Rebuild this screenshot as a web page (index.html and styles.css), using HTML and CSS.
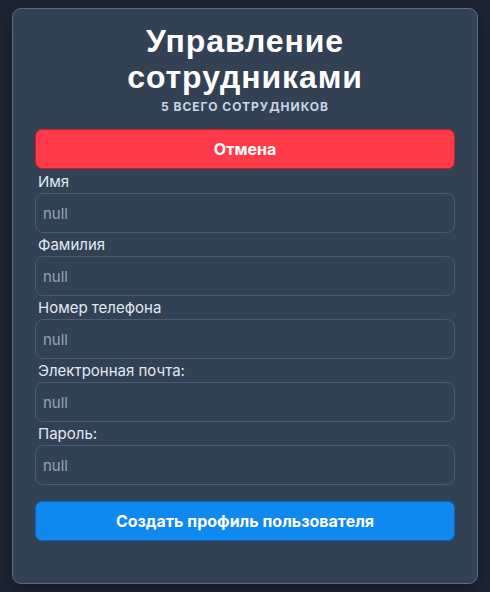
FILE: index.html
```html
<!DOCTYPE html>
<html lang="ru">
<head>
<meta charset="utf-8">
<link rel="stylesheet" href="styles.css">
</head>
<body>
<div class="card">
  <h1 class="title">Управление сотрудниками</h1>
  <div class="subtitle">5 всего сотрудников</div>
  <button class="btn btn-cancel">Отмена</button>
  <form class="form">
    <label class="field"><span class="label">Имя</span><input class="input" placeholder="null"></label>
    <label class="field"><span class="label">Фамилия</span><input class="input" placeholder="null"></label>
    <label class="field"><span class="label">Номер телефона</span><input class="input" placeholder="null"></label>
    <label class="field"><span class="label">Электронная почта:</span><input class="input" placeholder="null"></label>
    <label class="field"><span class="label">Пароль:</span><input class="input" placeholder="null"></label>
    <button type="button" class="btn btn-create">Создать профиль пользователя</button>
  </form>
</div>
</body>
</html>
```
FILE: styles.css
```css
* { box-sizing: border-box; }
html, body { margin: 0; height: 100%; }
body {
  background: #1d2634;
  font-family: Inter, "Liberation Sans", Arial, sans-serif;
  padding: 8px 12px;
}
.card {
  background: #334155;
  border: 1px solid #5b6b80;
  border-radius: 9px;
  box-shadow: 0 6px 20px rgba(0,0,0,0.35);
  padding: 14px 22px 43px;
  height: 576px;
}
.title {
  margin: 0;
  text-align: center;
  color: #ffffff;
  font-family: "Liberation Sans", Arial, sans-serif;
  font-weight: 700;
  font-size: 32px;
  line-height: 36px;
  letter-spacing: 0.9px;
}
.subtitle {
  text-align: center;
  color: #cbd5e1;
  font-size: 12px;
  font-weight: 700;
  text-transform: uppercase;
  letter-spacing: 1px;
  line-height: 18px;
  margin-top: 3px;
  margin-bottom: 13px;
}
.btn {
  display: block;
  width: 100%;
  height: 40px;
  border-radius: 7px;
  color: #fff;
  font-family: Inter, "Liberation Sans", sans-serif;
  font-weight: 700;
  font-size: 16px;
  cursor: pointer;
}
.btn-cancel {
  background: #ff3b4a;
  border: 1px solid #c0202c;
}
.btn-create {
  background: #0f88ef;
  border: 1px solid #0a64c8;
  margin-top: 16px;
}
.form {
  display: flex;
  flex-direction: column;
  margin-top: 1px;
}
.field { display: flex; flex-direction: column; }
.label {
  color: #e2e8f0;
  font-size: 15px;
  line-height: 23px;
  padding-left: 3px;
}
.input {
  height: 40px;
  background: transparent;
  border: 1px solid #4a5a70;
  border-radius: 8px;
  padding: 0 7px;
  font-family: Inter, "Liberation Sans", sans-serif;
  font-size: 15px;
  color: #e2e8f0;
  outline: none;
}
.input::placeholder { color: #94a3b8; }
```
